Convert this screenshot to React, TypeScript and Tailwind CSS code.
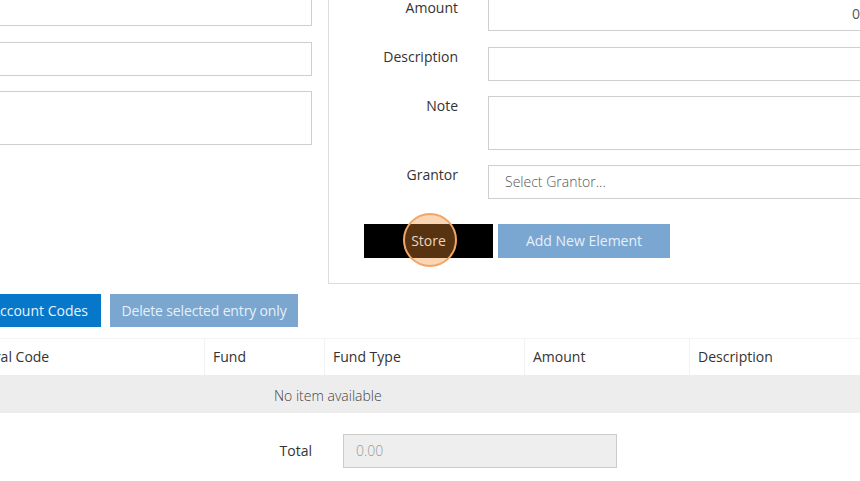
import React from "react";

export default function App() {
  return (
    <div className="w-[860px] h-[481px] overflow-hidden bg-white text-[14px] leading-[20px] text-[#333] font-['Open_Sans',sans-serif]">
      {/* Top section */}
      <div className="flex items-start mt-[-8px]">
        {/* Left column */}
        <div className="w-[400px] ml-[-88px] shrink-0 flex flex-col">
          <div className="h-[34px] border border-[#cfcfcf] bg-white" />
          <div className="h-[34px] mt-[16px] border border-[#cfcfcf] bg-white" />
          <div className="h-[54px] mt-[15px] border border-[#cfcfcf] bg-white" />
        </div>
        {/* Right panel */}
        <div className="ml-[16px] w-[545px] h-[292px] shrink-0 border-l border-b border-[#dcdcdc] pt-[5px] flex flex-col">
          <div className="flex items-start">
            <div className="w-[129px] text-right pt-[1px]">Amount</div>
            <div className="ml-[30px] flex-1 h-[34px] border border-[#cfcfcf] flex items-center justify-end pr-[12px] text-[#555]">0</div>
          </div>
          <div className="flex items-start mt-[16px]">
            <div className="w-[129px] text-right">Description</div>
            <div className="ml-[30px] flex-1 h-[34px] border border-[#cfcfcf]" />
          </div>
          <div className="flex items-start mt-[15px]">
            <div className="w-[129px] text-right">Note</div>
            <div className="ml-[30px] flex-1 h-[54px] border border-[#cfcfcf]" />
          </div>
          <div className="flex items-start mt-[15px]">
            <div className="w-[129px] text-right">Grantor</div>
            <div className="ml-[30px] flex-1 h-[34px] border border-[#cfcfcf] flex items-center pl-[16px] text-[#555] font-light">Select Grantor...</div>
          </div>
          <div className="flex mt-[25px] ml-[35px]">
            <div className="relative w-[129px] h-[34px] bg-black flex items-center justify-center text-[#ecd6bd]">
              <span className="relative z-10">Store</span>
              <div className="absolute left-[39px] top-[-11px] w-[54px] h-[54px] rounded-full border-2 border-[#f2a565] bg-[rgba(240,140,50,0.36)]" />
            </div>
            <div className="ml-[5px] w-[172px] h-[34px] bg-[#7aa7d2] flex items-center justify-center text-[#e6eff8]">Add New Element</div>
          </div>
        </div>
      </div>

      {/* Bottom buttons */}
      <div className="flex mt-[10px]">
        <div className="w-[101px] shrink-0 flex justify-end">
          <div className="shrink-0 whitespace-nowrap h-[33px] px-[13px] bg-[#0778c9] text-[#e8f2fb] flex items-center">Add Account Codes</div>
        </div>
        <div className="ml-[9px] w-[188px] h-[33px] bg-[#7aa6cf] text-[#e6eff8] flex items-center justify-center whitespace-nowrap tracking-[-0.15px]">Delete selected entry only</div>
      </div>

      {/* Table */}
      <div className="mt-[11px]">
        <div className="flex h-[37px] items-center bg-white border-t border-[#f4f4f4]">
          <div className="w-[204px] shrink-0 h-full flex items-center overflow-hidden">
            <span className="ml-[-37px] whitespace-nowrap">Natural Code</span>
          </div>
          <div className="w-[120px] shrink-0 h-full flex items-center pl-[8px] border-l border-[#f2f2f2]">Fund</div>
          <div className="w-[200px] shrink-0 h-full flex items-center pl-[8px] border-l border-[#f2f2f2]">Fund Type</div>
          <div className="w-[165px] shrink-0 h-full flex items-center pl-[8px] border-l border-[#f2f2f2]">Amount</div>
          <div className="flex-1 h-full flex items-center pl-[8px] border-l border-[#f2f2f2]">Description</div>
        </div>
        <div className="h-[38px] bg-[#eeeded] flex items-center pl-[274px] pt-[3px] text-[#444] font-light">No item available</div>
      </div>

      {/* Total */}
      <div className="flex items-center mt-[21px]">
        <div className="w-[312px] shrink-0 text-right">Total</div>
        <div className="ml-[31px] w-[274px] h-[34px] bg-[#eeeeee] border border-[#cccccc] flex items-center pl-[12px] text-[#999] font-light">0.00</div>
      </div>
    </div>
  );
}
